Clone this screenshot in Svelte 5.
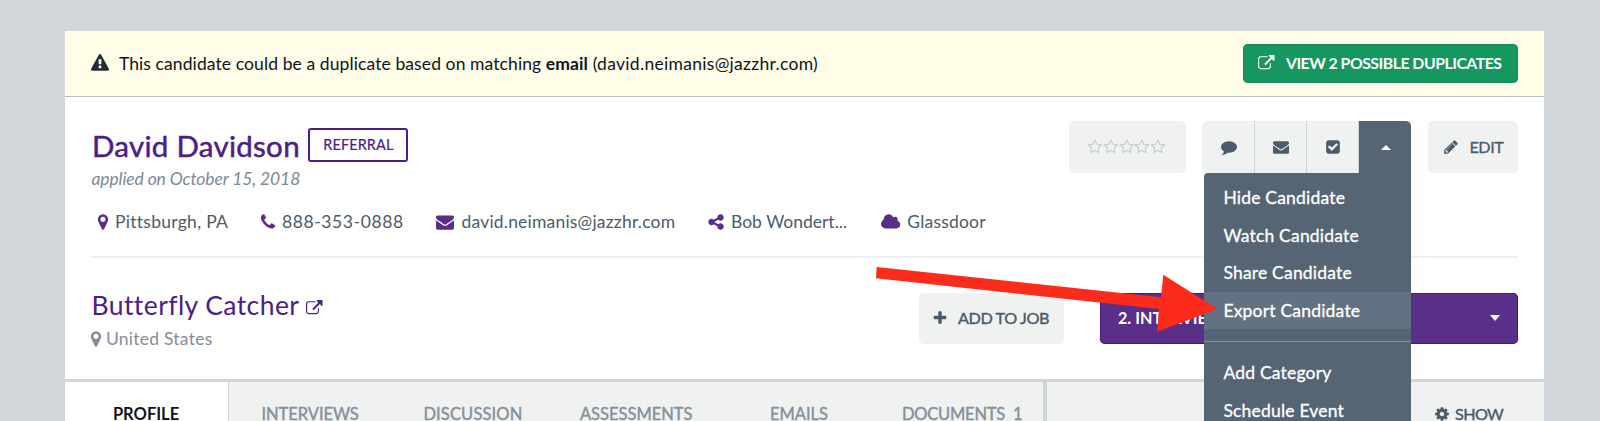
<script>
  const icons = {
    warning: 'M1024 1375v-190q0-14-9.5-23.5t-22.5-9.5h-192q-13 0-22.5 9.5t-9.5 23.5v190q0 14 9.5 23.5t22.5 9.5h192q13 0 22.5-9.5t9.5-23.5zm-2-374l18-459q0-12-10-19-13-11-24-11h-220q-11 0-24 11-10 7-10 21l17 457q0 10 10 16.5t24 6.5h185q14 0 23.5-6.5t10.5-16.5zm-14-934l768 1408q35 63-2 126-17 29-46.5 46t-63.5 17h-1536q-34 0-63.5-17t-46.5-46q-37-63-2-126l768-1408q17-31 47-49t65-18 65 18 47 49z',
    external: 'M1408 928v320q0 119-84.5 203.5t-203.5 84.5h-832q-119 0-203.5-84.5t-84.5-203.5v-832q0-119 84.5-203.5t203.5-84.5h704q14 0 23 9t9 23v64q0 14-9 23t-23 9h-704q-66 0-113 47t-47 113v832q0 66 47 113t113 47h832q66 0 113-47t47-113v-320q0-14 9-23t23-9h64q14 0 23 9t9 23zm384-864v512q0 26-19 45t-45 19-45-19l-176-176-652 652q-10 10-23 10t-23-10l-114-114q-10-10-10-23t10-23l652-652-176-176q-19-19-19-45t19-45 45-19h512q26 0 45 19t19 45z',
    marker: 'M1152 640q0-106-75-181t-181-75-181 75-75 181 75 181 181 75 181-75 75-181zm256 0q0 109-33 179l-364 774q-16 33-47.5 52t-67.5 19-67.5-19-46.5-52l-365-774q-33-70-33-179 0-212 150-362t362-150 362 150 150 362z',
    phone: 'M1600 1240q0 27-10 70.5t-21 68.5q-21 50-122 106-94 51-186 51-27 0-53-3.5t-57.5-12.5-47-14.5-55.5-20.5-49-18q-98-35-175-83-127-79-264-216t-216-264q-48-77-83-175-3-9-18-49t-20.5-55.5-14.5-47-12.5-57.5-3.5-53q0-92 51-186 56-101 106-122 25-11 68.5-21t70.5-10q14 0 21 3 18 6 53 76 11 19 30 54t35 63.5 31 53.5q3 4 17.5 25t21.5 35.5 7 28.5q0 20-28.5 50t-62 55-62 53-28.5 46q0 9 5 22.5t8.5 20.5 14 24 11.5 19q76 137 174 235t235 174q2 1 19 11.5t24 14 20.5 8.5 22.5 5q18 0 46-28.5t53-62 55-62 50-28.5q14 0 28.5 7t35.5 21.5 25 17.5q25 15 53.5 31t63.5 35 54 30q70 35 76 53 3 7 3 21z',
    envelope: 'M1792 710v794q0 66-47 113t-113 47h-1472q-66 0-113-47t-47-113v-794q44 49 101 87 362 246 497 345 57 42 92.5 65.5t94.5 48 110 24.5h2q51 0 110-24.5t94.5-48 92.5-65.5q170-123 498-345 57-39 100-87zm0-294q0 79-49 151t-122 123q-376 261-468 325-10 7-42.5 30.5t-54 38-52 32.5-57.5 27-50 9h-2q-23 0-50-9t-57.5-27-52-32.5-54-38-42.5-30.5q-91-64-262-182.5t-205-142.5q-62-42-117-115.5t-55-136.5q0-78 41.5-130t118.5-52h1472q65 0 112.5 47t47.5 113z',
    share: 'M1344 1024q133 0 226.5 93.5t93.5 226.5-93.5 226.5-226.5 93.5-226.5-93.5-93.5-226.5q0-12 2-34l-360-180q-92 86-218 86-133 0-226.5-93.5t-93.5-226.5 93.5-226.5 226.5-93.5q126 0 218 86l360-180q-2-22-2-34 0-133 93.5-226.5t226.5-93.5 226.5 93.5 93.5 226.5-93.5 226.5-226.5 93.5q-126 0-218-86l-360 180q2 22 2 34t-2 34l360 180q92-86 218-86z',
    cloud: 'M1984 1152q0 159-112.5 271.5t-271.5 112.5h-1088q-185 0-316.5-131.5t-131.5-316.5q0-132 71-241.5t187-163.5q-2-28-2-43 0-212 150-362t362-150q158 0 286.5 88t187.5 230q70-62 166-62 106 0 181 75t75 181q0 75-41 138 129 30 213 134.5t84 239.5z',
    comment: 'M1792 896q0 174-120 321.5t-326 233-450 85.5q-70 0-145-8-198 175-460 242-49 14-114 22-17 2-30.5-9t-17.5-29v-1q-3-4-.5-12t2-10 4.5-9.5l6-9 7-8.5 8-9q7-8 31-34.5t34.5-38 31-39.5 32.5-51 27-59 26-76q-157-89-247.5-220t-90.5-281q0-130 71-248.5t191-204.5 286-136.5 348-50.5 348 50.5 286 136.5 191 204.5 71 248.5z',
    check: 'M813 1299l614-614q19-19 19-45t-19-45l-102-102q-19-19-45-19t-45 19l-467 467-211-211q-19-19-45-19t-45 19l-102 102q-19 19-19 45t19 45l358 358q19 19 45 19t45-19zm851-883v960q0 119-84.5 203.5t-203.5 84.5h-960q-119 0-203.5-84.5t-84.5-203.5v-960q0-119 84.5-203.5t203.5-84.5h960q119 0 203.5 84.5t84.5 203.5z',
    pencil: 'M491 1536l91-91-235-235-91 91v107h128v128h107zm523-928q0-22-22-22-10 0-17 7l-542 542q-7 7-7 17 0 22 22 22 10 0 17-7l542-542q7-7 7-17zm-54-192l416 416-832 832h-416v-416zm683 96q0 53-37 90l-166 166-416-416 166-165q36-38 90-38 53 0 91 38l235 234q37 39 37 91z',
    plus: 'M1600 736v192q0 40-28 68t-68 28h-416v416q0 40-28 68t-68 28h-192q-40 0-68-28t-28-68v-416h-416q-40 0-68-28t-28-68v-192q0-40 28-68t68-28h416v-416q0-40 28-68t68-28h192q40 0 68 28t28 68v416h416q40 0 68 28t28 68z',
    star: 'M1201 1004l306-297-422-62-189-382-189 382-422 62 306 297-73 421 378-199 377 199zm527-357q0 22-26 48l-363 354 86 500q1 7 1 20 0 50-41 50-19 0-40-12l-449-236-449 236q-22 12-40 12-21 0-31.5-14.5t-10.5-35.5q0-6 2-20l86-500-364-354q-25-27-25-48 0-37 56-46l502-73 225-455q19-41 49-41t49 41l225 455 502 73q56 9 56 46z',
    cog: 'M1152 896q0-106-75-181t-181-75-181 75-75 181 75 181 181 75 181-75 75-181zm512-109v222q0 12-8 23t-20 13l-185 28q-19 54-39 91 35 50 107 138 10 12 10 25t-9 23q-27 37-99 108t-94 71q-12 0-26-9l-138-108q-44 23-91 38-16 136-29 186-7 28-36 28h-222q-14 0-24.5-8.5t-11.5-21.5l-28-184q-49-16-90-37l-141 107q-10 9-25 9-14 0-25-11-126-114-165-168-7-10-7-23 0-12 8-23 15-21 51-66.5t54-70.5q-27-50-41-99l-183-27q-13-2-21-12.5t-8-23.5v-222q0-12 8-23t19-13l186-28q14-46 39-92-40-57-107-138-10-12-10-24 0-10 9-23 26-36 98.5-107.5t94.5-71.5q13 0 26 10l138 107q44-23 91-38 16-136 29-186 7-28 36-28h222q14 0 24.5 8.5t11.5 21.5l28 184q49 16 90 37l142-107q9-9 24-9 13 0 25 10 129 119 165 170 7 8 7 22 0 12-8 23-15 21-51 66.5t-54 70.5q26 50 41 98l183 28q13 2 21 12.5t8 23.5z'
  };

  const contacts = [
    { kind: 'place', icon: 'marker', text: 'Pittsburgh, PA' },
    { kind: 'phone', icon: 'phone', text: '888-353-0888' },
    { kind: 'mail', icon: 'envelope', text: 'david.neimanis@jazzhr.com' },
    { kind: 'referrer', icon: 'share', text: 'Bob Wondert...' },
    { kind: 'source', icon: 'cloud', text: 'Glassdoor' }
  ];

  const menu = ['Hide Candidate', 'Watch Candidate', 'Share Candidate', 'Export Candidate'];
  const moreMenu = ['Add Category', 'Schedule Event'];
</script>

{#snippet icon(name, size)}
  <svg
    class="icon"
    width={name === 'cloud' ? (size * 15) / 14 : size}
    height={size}
    viewBox={name === 'cloud' ? '64 0 1920 1792' : '0 0 1792 1792'}
    aria-hidden="true"><path d={icons[name]} /></svg>
{/snippet}

<main class="panel">
  <section class="notice">
    <span class="warn">{@render icon('warning', 18)}</span>
    <p>This candidate could be a duplicate based on matching <b>email</b> <span class="match">(david.neimanis@jazzhr.com)</span></p>
    <button class="duplicates">{@render icon('external', 16.5)}<span>VIEW 2 POSSIBLE DUPLICATES</span></button>
  </section>

  <section class="candidate">
    <div class="top">
      <div class="identity">
        <div class="name-row">
          <h1>David Davidson</h1>
          <span class="badge">REFERRAL</span>
        </div>
        <p class="applied">applied on October 15, 2018</p>
      </div>
      <div class="actions">
        <div class="stars">
          {#each Array(5) as _}{@render icon('star', 15.8)}{/each}
        </div>
        <div class="group">
          <button>{@render icon('comment', 16)}</button>
          <button>{@render icon('envelope', 16)}</button>
          <button>{@render icon('check', 16)}</button>
          <button class="open"><i class="caret up"></i></button>
          <div class="menu">
            {#each menu as item}
              <a class:active={item === 'Export Candidate'}>{item}</a>
            {/each}
            <hr />
            {#each moreMenu as item}
              <a>{item}</a>
            {/each}
          </div>
        </div>
        <button class="edit">{@render icon('pencil', 16)}<span>EDIT</span></button>
      </div>
    </div>
    <ul class="contacts">
      {#each contacts as c}
        <li class={c.kind}><span class="glyph">{@render icon(c.icon, 18)}</span><span class="value">{c.text}</span></li>
      {/each}
    </ul>
  </section>

  <section class="job">
    <div class="job-info">
      <h2>Butterfly Catcher <span class="link">{@render icon('external', 16.5)}</span></h2>
      <p>{@render icon('marker', 18)}<span>United States</span></p>
    </div>
    <button class="add">{@render icon('plus', 16)}<span>ADD TO JOB</span></button>
    <button class="stage"><span>2. INTERVIEW</span><i class="caret"></i></button>
  </section>

  <nav class="tabs">
    <a class="profile">PROFILE</a>
    <a class="interviews">INTERVIEWS</a>
    <a class="discussion">DISCUSSION</a>
    <a class="assessments">ASSESSMENTS</a>
    <a class="emails">EMAILS</a>
    <a class="documents">DOCUMENTS <span>1</span></a>
    <a class="show">{@render icon('cog', 16)}<span>SHOW</span></a>
  </nav>

  <svg class="arrow" width="342" height="58" viewBox="876 274 342 58" aria-hidden="true">
    <path d="M876.7 267L1161 297.3L1163.3 274.7L1217.5 309L1157 331.8L1159 309L876 278.2Z" />
  </svg>
</main>

<style>
  :global(body) {
    background: #d2d7db;
    overflow: hidden;
    height: 421px;
  }
  .panel, .panel * { box-sizing: border-box; }
  .panel {
    position: relative;
    width: 1478.6px;
    height: 390px;
    margin: 31px 0 0 65.4px;
    background: #fff;
    font-family: Lato, sans-serif;
    font-size: 17.5px;
    line-height: 24px;
    color: #4b5b69;
    white-space: nowrap;
    overflow: hidden;
  }
  h1, h2, p, ul { margin: 0; padding: 0; font-weight: 400; }
  button {
    border: 0;
    padding: 0;
    font: inherit;
    color: inherit;
    background: #f0f2f2;
    display: flex;
    align-items: center;
    border-radius: 5px;
  }
  .icon { display: block; fill: currentColor; flex: none; overflow: visible; }

  .notice {
    height: 66px;
    background: #fffce8;
    border-bottom: 1px solid #b9bfca;
    display: flex;
    align-items: center;
    padding: 0 26px;
    color: #0c151d;
  }
  .warn { color: #202c36; margin-right: 9.5px; margin-top: -2px; }
  .notice p { flex: 1; letter-spacing: 0.1px; }
  .match { letter-spacing: 0.3px; }
  .duplicates {
    width: 274.6px;
    height: 39px;
    padding-left: 15px;
    background: #169760;
    color: #fff;
    font-size: 15.8px;
    font-weight: 700;
    letter-spacing: -0.48px;
    box-shadow: inset 0 0 0 1px #0d8f57;
    margin-top: -1px;
  }
  .duplicates span { margin-left: 11px; }

  .candidate {
    height: 161px;
    margin: 0 26px 0 25.6px;
    border-bottom: 2px solid #edf0f0;
    padding-top: 24px;
  }
  .top { display: flex; justify-content: space-between; height: 83px; }
  .name-row { display: flex; align-items: flex-start; height: 44px; padding: 7px 0 0 1px; }
  h1 { font-size: 29.5px; line-height: 35px; font-weight: 400; letter-spacing: 0.28px; color: #4d1c86; -webkit-text-stroke: 0.5px #4d1c86; }
  .badge {
    width: 100px;
    height: 34px;
    margin-left: 8.5px;
    border: 2px solid #4d1c86;
    border-radius: 3px;
    color: #4d1c86;
    font-size: 14.5px;
    line-height: 30px;
    letter-spacing: 0.1px;
    text-align: center;
    -webkit-text-stroke: 0.2px;
  }
  .applied { font-style: italic; color: #7d8994; line-height: 28px; letter-spacing: -0.12px; padding-left: 0.5px; }

  .actions { display: flex; }
  .stars {
    width: 117px;
    height: 52px;
    padding-left: 18px;
    border-radius: 5px;
    background: #f0f2f2;
    color: #c6cbd0;
    display: flex;
    align-items: center;
  }
  .group { position: relative; display: flex; margin: 0 17px 0 16.5px; width: 208.5px; height: 52px; }
  .group button { width: 52px; justify-content: center; border-radius: 0; border-right: 1.5px solid #cdd2d7; padding-left: 1px; }
  .group button:first-child { border-radius: 5px 0 0 5px; width: 53px; }
  .group .open { flex: 1; background: #566573; border: 0; border-radius: 0 5px 0 0; }
  .menu {
    position: absolute;
    z-index: 2;
    top: 52px;
    left: 1.5px;
    right: 0;
    height: 300px;
    padding-top: 6px;
    background: #566573;
    border-radius: 4px 0 0 0;
    color: #fff;
  }
  .menu a { display: block; height: 37.6px; line-height: 37px; padding-left: 19.4px; letter-spacing: 0.2px; -webkit-text-stroke: 0.3px #fff; }
  .menu .active { background: #637282; }
  .menu hr { border: 0; border-top: 1px solid #87929d; margin: 12px 0; }
  .edit { width: 90px; height: 52px; padding: 0 0 1px 15px; font-size: 16.2px; letter-spacing: -0.5px; }
  .edit span { margin-left: 10.5px; -webkit-text-stroke: 0.3px; }

  .caret { border: 5.5px solid transparent; border-top: 6px solid #fff; border-bottom: 0; }
  .caret.up { border: 5px solid transparent; border-bottom: 5.5px solid #fff; border-top: 0; }

  .contacts { display: flex; list-style: none; padding-top: 6px; }
  .contacts li { display: flex; align-items: center; }
  .glyph { color: #5a2d87; }
  .place { width: 168px; letter-spacing: 0.28px; }
  .phone { width: 177px; letter-spacing: 0.6px; }
  .mail { width: 271px; letter-spacing: 0.2px; }
  .referrer { width: 174px; }
  .source { letter-spacing: 0.2px; }
  .place .glyph { margin: 0 3px 0 3px; }
  .phone .glyph { margin-right: 5px; }
  .mail .glyph { margin-right: 7.5px; }
  .referrer .glyph { margin-right: 6px; }
  .source .glyph { margin-right: 7px; }

  .job { display: flex; height: 121px; margin: 0 26px 0 25.6px; }
  .job-info { flex: 1; padding-top: 30px; }
  h2 { font-size: 26.5px; line-height: 34px; letter-spacing: 0.42px; color: #4d1c86; display: flex; align-items: center; padding-left: 0.5px; }
  .link { margin: 6px 0 0 6.5px; }
  .job-info p { display: flex; align-items: center; margin-left: -4px; padding-top: 4.5px; color: #838e98; letter-spacing: 0.25px; }
  .job-info p span { margin-left: 0.9px; }
  .add { width: 145px; height: 51px; margin: 35px 36px 0 0; padding: 0 0 1px 13px; font-size: 16.2px; letter-spacing: -0.4px; }
  .add span { margin-left: 10px; -webkit-text-stroke: 0.4px; }
  .stage {
    width: 418px;
    height: 51px;
    margin-top: 35px;
    padding: 0 18px 1px;
    justify-content: space-between;
    background: #5a2f88;
    box-shadow: inset 0 0 0 1px #49197f;
    color: #fff;
    font-size: 16.2px;
    font-weight: 700;
  }

  .tabs {
    display: flex;
    height: 60px;
    border-top: 3px solid #d0d5da;
    background: #f0f2f2;
    color: #84909b;
    font-size: 16.5px;
    line-height: 64px;
  }
  .tabs a { -webkit-text-stroke: 0.4px; }
  .profile { width: 163.6px; background: #fff; border-right: 1.5px solid #cdd3d8; padding-left: 47.5px; color: #0c151d; font-weight: 700; }
  .profile.profile { -webkit-text-stroke: 0; }
  .interviews { width: 161.4px; padding-left: 32.5px; letter-spacing: -0.05px; }
  .discussion { width: 156px; padding-left: 33px; letter-spacing: 0.15px; }
  .assessments { width: 190px; padding-left: 33.5px; }
  .emails { width: 132px; padding-left: 33.5px; }
  .documents { width: 178.6px; padding-left: 33.5px; border-right: 4px solid #d0d5da; letter-spacing: -0.2px; }
  .documents span { margin-left: 4px; }
  .show { display: flex; align-items: center; height: 64px; margin-left: 387px; color: #4b5b69; font-size: 16.2px; letter-spacing: -0.6px; }
  .show span { margin-left: 5px; }

  .arrow { position: absolute; z-index: 3; left: 810.6px; top: 243px; fill: #fc2b1c; overflow: visible; }
</style>
